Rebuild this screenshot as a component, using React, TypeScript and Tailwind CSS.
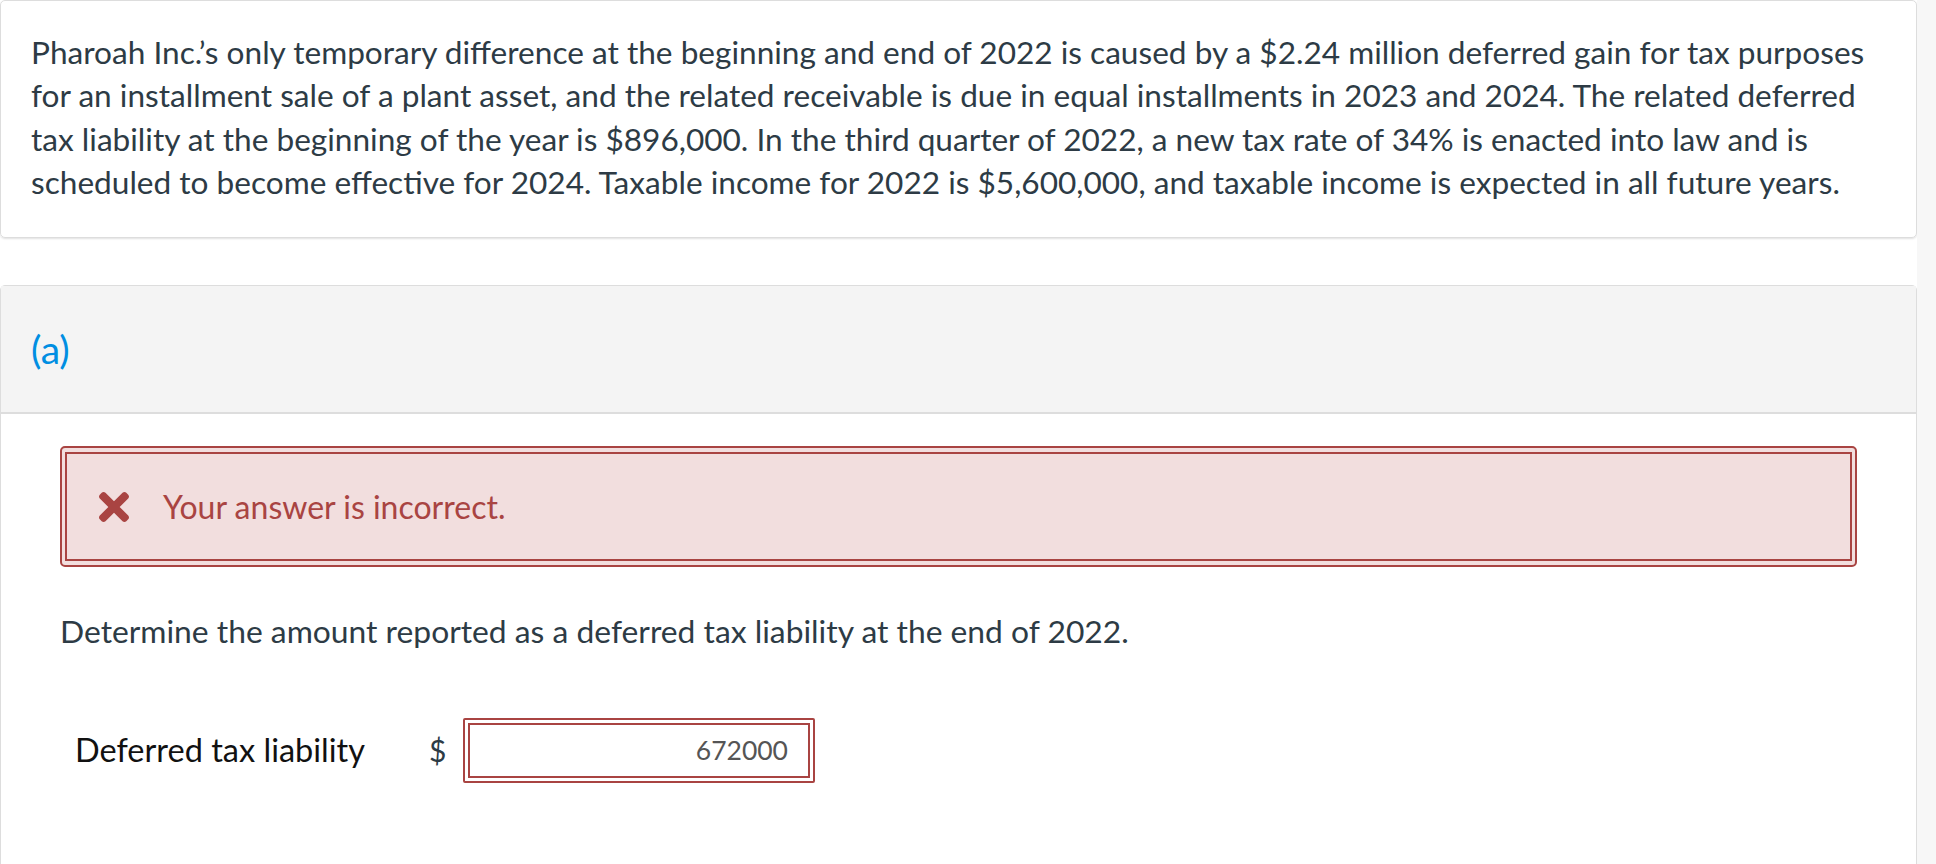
import React from "react";
import { FaTimes } from "react-icons/fa";

export default function App() {
  return (
    <div className="flex h-screen overflow-hidden bg-white font-['Lato',sans-serif]">
      <div className="min-w-0 flex-1">
        <div className="rounded-[5px] border border-[#dddddd] px-[30px] pb-[33px] pt-[30px] text-[31.6px] leading-[43.3px] text-[#2d3b45] shadow-[0_1px_2px_rgba(0,0,0,0.12)]">
          Pharoah Inc.’s only temporary difference at the beginning and end of 2022 is caused by a $2.24 million deferred gain for tax purposes for an installment sale of a plant asset, and the related receivable is due in equal installments in 2023 and 2024. The related deferred tax liability at the beginning of the year is $896,000. In the third quarter of 2022, a new tax rate of 34% is enacted into law and is scheduled to become effective for 2024. Taxable income for 2022 is $5,600,000, and taxable income is expected in all future years.
        </div>

        <div className="mt-[47px] rounded-t-[5px] border border-[#dddddd]">
          <div className="flex h-[128px] items-center border-b-2 border-[#dddddd] bg-[#f4f4f4] px-[30px] text-[39px] text-[#008ee2]">
            (a)
          </div>
          <div className="px-[59px] pb-[200px] pt-[32px]">
            <div className="rounded-[5px] border-2 border-[#a94442] bg-[#f2dede] px-[3px] py-[4px]">
              <div className="flex h-[109px] items-center border-2 border-[#a94442] pl-[32px] text-[32px] text-[#a94442]">
                <FaTimes className="h-[44px] w-[30px] shrink-0" />
                <span className="ml-[34px]">Your answer is incorrect.</span>
              </div>
            </div>

            <p className="mt-[43px] text-[31.8px] leading-[43px] text-[#2d3b45]">
              Determine the amount reported as a deferred tax liability at the end of 2022.
            </p>

            <div className="mt-[65px] flex items-center">
              <div className="ml-[15px] w-[354px] text-[32.5px] text-[#111111]">Deferred tax liability</div>
              <div className="w-[34px] text-[30px] text-[#2d3b45]">$</div>
              <div className="w-[352px] rounded-[2px] border-2 border-[#a94442] bg-white p-[3px]">
                <div className="flex h-[55px] items-center justify-end border-2 border-[#a94442] pr-[20px] text-[26.5px] text-[#555555]">
                  672000
                </div>
              </div>
            </div>
          </div>
        </div>
      </div>
      <div className="w-[19px] shrink-0 bg-[#f7f7f7]" />
    </div>
  );
}
